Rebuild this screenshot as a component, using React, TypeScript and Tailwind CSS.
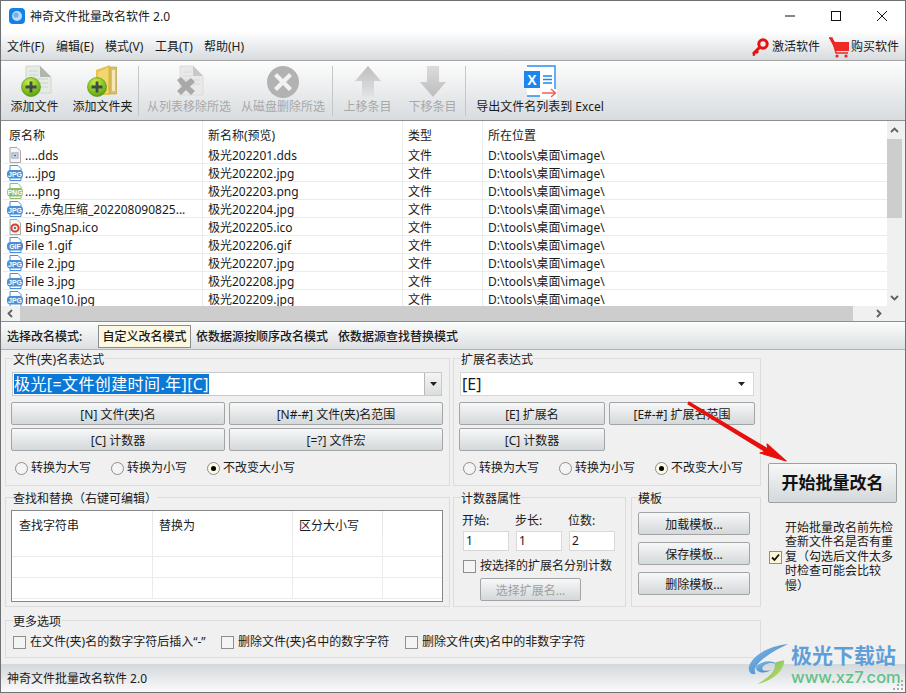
import React from "react";

const FONT = "font-['Noto_Sans','Noto_Sans_CJK_SC',sans-serif]";

function Plus({ x, y }: { x: number; y: number }) {
  return (
    <g transform={`translate(${x} ${y})`}>
      <circle r="9.5" fill="url(#gb)" stroke="#4f8a10" strokeWidth="0.6" />
      <path d="M-5.5 -1.4H-1.4V-5.5H1.4V-1.4H5.5V1.4H1.4V5.5H-1.4V1.4H-5.5Z" fill="#3c4a4a" />
    </g>
  );
}

function AddFileIcon() {
  return (
    <svg width="34" height="34" viewBox="0 0 34 34">
      <defs>
        <radialGradient id="gb" cx="0.4" cy="0.25" r="0.9">
          <stop offset="0" stopColor="#c8ec50" />
          <stop offset="0.6" stopColor="#7cbb1c" />
          <stop offset="1" stopColor="#4f8f12" />
        </radialGradient>
      </defs>
      <path d="M8 1H22L33 12V28H8Z" fill="#e6ebe6" stroke="#c4cac4" strokeWidth="0.7" />
      <path d="M22 1V12H33Z" fill="#aeb6ae" />
      <path d="M11 6H20M11 10H20M11 14H30M11 18H30M11 22H30" stroke="#cbd6c8" strokeWidth="1" />
      <Plus x={13} y={22} />
    </svg>
  );
}

function AddFolderIcon() {
  return (
    <svg width="34" height="34" viewBox="0 0 34 34">
      <path d="M10 5L24 0V30L10 30Z" fill="#e6c44e" />
      <path d="M24 2H30.5V29H24Z" fill="#dcc068" stroke="#b99a34" strokeWidth="0.6" />
      <path d="M26 5H29V26H26Z" fill="#f4e9b6" />
      <path d="M12 7L22 3V28H12Z" fill="#f0d772" />
      <Plus x={11} y={22} />
    </svg>
  );
}

function RemoveFileIcon() {
  return (
    <svg width="34" height="34" viewBox="0 0 34 34">
      <path d="M8 1H21L31 11V30H8Z" fill="#e9e9e9" stroke="#d5d5d5" strokeWidth="0.7" />
      <path d="M21 1V11H31Z" fill="#c8c8c8" />
      <path d="M11 7H19M11 11H19M11 15H28M11 19H28" stroke="#d8d8d8" strokeWidth="1" />
      <path d="M5 15L9 12L14 17L19 13L23 17L18 21.5L23 26L19 30L14 25L9 30L5 26L10 21.5Z" fill="#a8a8a8" />
    </svg>
  );
}

function DeleteDiskIcon() {
  return (
    <svg width="34" height="34" viewBox="0 0 34 34">
      <circle cx="17" cy="17" r="16" fill="#b2b2b2" />
      <path d="M11 8L17 14L23 8L26 11L20 17L26 23L23 26L17 20L11 26L8 23L14 17L8 11Z" fill="#f2f2f2" />
    </svg>
  );
}

function ArrowUp({ down }: { down?: boolean }) {
  return (
    <svg width="34" height="34" viewBox="0 0 34 34">
      <defs>
        <linearGradient id="ga" x1="0" y1="0" x2="0" y2="1">
          <stop offset="0" stopColor="#bdbdbd" />
          <stop offset="1" stopColor="#e4e4e4" />
        </linearGradient>
        <linearGradient id="gd" x1="0" y1="0" x2="0" y2="1">
          <stop offset="0" stopColor="#dcdcdc" />
          <stop offset="1" stopColor="#bcbcbc" />
        </linearGradient>
      </defs>
      {down ? (
        <path d="M11 1H23V17H30L17 32L4 17H11Z" fill="url(#gd)" />
      ) : (
        <path d="M17 1L30 16H23V32H11V16H4Z" fill="url(#ga)" />
      )}
    </svg>
  );
}

function ExcelIcon() {
  return (
    <svg width="34" height="34" viewBox="0 0 34 34">
      <path d="M4 1H32V31H4" fill="#fff" stroke="#2a8df0" strokeWidth="1.4" />
      <rect x="1" y="6" width="16" height="17" fill="#1d85ee" />
      <text x="9" y="19.5" textAnchor="middle" fontSize="14" fontWeight="700" fill="#fff" fontFamily="Liberation Sans">
        X
      </text>
      <path d="M20 11H29M20 14.5H29M20 18H29" stroke="#1d85ee" strokeWidth="1.4" />
      <rect x="17" y="24" width="17" height="10" fill="#fff" />
      <path d="M19 28H32M28 24L32.5 28L28 32" fill="none" stroke="#f0605c" strokeWidth="1.4" />
    </svg>
  );
}

function ToolButton({
  icon,
  label,
  disabled,
  className,
}: {
  icon: React.ReactNode;
  label: string;
  disabled?: boolean;
  className: string;
}) {
  return (
    <div className={`flex flex-col items-center shrink-0 ${className}`}>
      <div className="h-[34px] mt-[4px]">{icon}</div>
      <div className={`text-[12px] leading-[16px] whitespace-nowrap ${disabled ? "text-[#a8a8a8]" : "text-[#1a1a1a]"}`}>
        {label}
      </div>
    </div>
  );
}

function ToolSep() {
  return <div className="w-[1px] h-[50px] mt-[5px] bg-[#c4c6c8] shrink-0" />;
}

function FileBadge({ kind }: { kind: string }) {
  const color = kind === "PNG" ? "#8fbb73" : "#4a8ed8";
  if (kind === "DOC") {
    return (
      <svg width="16" height="16" viewBox="0 0 16 16" className="shrink-0">
        <path d="M3 .5H10L13.5 4V15.5H3Z" fill="#f6f6f6" stroke="#a8a8a8" />
        <rect x="5" y="6" width="6" height="5" fill="#fff" stroke="#8a94a8" />
        <rect x="6.5" y="7.5" width="3" height="2" fill="#4f7fb8" />
      </svg>
    );
  }
  if (kind === "ICO") {
    return (
      <svg width="16" height="16" viewBox="0 0 16 16" className="shrink-0">
        <path d="M3 .5H10L13.5 4V15.5H3Z" fill="#f6f6f6" stroke="#a8a8a8" />
        <circle cx="8" cy="9" r="3.6" fill="none" stroke="#d8402c" strokeWidth="2" />
        <circle cx="8" cy="9" r="1.2" fill="#3f7fc0" />
      </svg>
    );
  }
  return (
    <svg width="16" height="16" viewBox="0 0 16 16" className="shrink-0">
      <path d="M3 .5H11L14 3.5V15.5H3Z" fill="#fff" stroke={color} />
      <rect x="0" y="5" width="16" height="8.5" rx="3.5" fill={color} />
      <text x="8" y="12" textAnchor="middle" fontSize="7" fontWeight="700" fill="#fff" fontFamily="Liberation Sans">
        {kind}
      </text>
    </svg>
  );
}

const ROWS = [
  ["DOC", "....dds", "极光202201.dds"],
  ["JPG", "....jpg", "极光202202.jpg"],
  ["PNG", "....png", "极光202203.png"],
  ["JPG", "..._赤兔压缩_202208090825...", "极光202204.jpg"],
  ["ICO", "BingSnap.ico", "极光202205.ico"],
  ["GIF", "File 1.gif", "极光202206.gif"],
  ["JPG", "File 2.jpg", "极光202207.jpg"],
  ["JPG", "File 3.jpg", "极光202208.jpg"],
  ["JPG", "image10.jpg", "极光202209.jpg"],
];

function Chevron({ d, className }: { d: string; className?: string }) {
  return (
    <svg width="9" height="9" viewBox="0 0 9 9" className={className}>
      <path d={d} fill="none" stroke="#606060" strokeWidth="1.8" />
    </svg>
  );
}

function Btn({ children, className, disabled }: { children: React.ReactNode; className: string; disabled?: boolean }) {
  return (
    <div
      className={`flex items-center justify-center h-[23px] pt-[2px] rounded-[2px] border border-[#a2a4a6] bg-gradient-to-b from-[#f7f8f8] to-[#d3d8da] text-[12px] whitespace-pre shrink-0 ${
        disabled ? "text-[#a0a0a0]" : "text-[#1a1a1a]"
      } ${className}`}
    >
      {children}
    </div>
  );
}

function Group({
  title,
  className,
  legend,
  children,
}: {
  title: string;
  className: string;
  legend: string;
  children: React.ReactNode;
}) {
  return (
    <fieldset className={`border border-[#dcdcdc] min-w-0 shrink-0 ${className}`}>
      <legend className={`relative top-[2px] text-[12px] leading-[16px] text-[#1a1a1a] whitespace-nowrap ${legend}`}>{title}</legend>
      {children}
    </fieldset>
  );
}

function Radio({ label, checked, className }: { label: string; checked?: boolean; className: string }) {
  return (
    <div className={`flex items-center shrink-0 ${className}`}>
      <div
        className={`w-[13px] h-[13px] rounded-full border border-[#8e8e8e] flex items-center justify-center ${
          checked ? "bg-[#fdf9e6]" : "bg-[#f4f4f4]"
        }`}
      >
        {checked && <div className="w-[5px] h-[5px] rounded-full bg-black" />}
      </div>
      <span className="ml-[3px] text-[12px] text-[#1a1a1a] whitespace-nowrap">{label}</span>
    </div>
  );
}

function Check({ label, checked, className }: { label?: string; checked?: boolean; className?: string }) {
  return (
    <div className={`flex items-center shrink-0 ${className ?? ""}`}>
      <div
        className={`w-[13px] h-[13px] border border-[#8e8e8e] flex items-center justify-center ${
          checked ? "bg-[#fdf7d8]" : "bg-[#f4f4f4]"
        }`}
      >
        {checked && (
          <svg width="9" height="9" viewBox="0 0 9 9">
            <path d="M1 4.5L3.5 7L8 1.5" fill="none" stroke="#111" strokeWidth="1.8" />
          </svg>
        )}
      </div>
      {label && <span className="ml-[4px] text-[12px] text-[#1a1a1a] whitespace-nowrap">{label}</span>}
    </div>
  );
}

function Caret() {
  return (
    <svg width="7" height="4" viewBox="0 0 7 4">
      <path d="M0 0H7L3.5 4Z" fill="#222" />
    </svg>
  );
}

function RadioRow() {
  return (
    <div className="flex items-center mt-[8px] h-[18px]">
      <Radio label="转换为大写" className="w-[96px]" />
      <Radio label="转换为小写" className="w-[96px]" />
      <Radio label="不改变大小写" checked className="" />
    </div>
  );
}

function NumField({ label, value }: { label: string; value: string }) {
  return (
    <div className="w-[46px] mr-[7px] shrink-0">
      <div className="text-[12px] leading-[16px] text-[#1a1a1a] ml-[-1px] pt-[1px] h-[16px]">{label}</div>
      <div className="mt-[3px] h-[20px] w-[46px] bg-white border border-[#d8d8d8] text-[12px] leading-[18px] pl-[2px] text-[#1a1a1a]">
        {value}
      </div>
    </div>
  );
}

export default function App() {
  return (
    <div className={`relative w-[906px] h-[693px] overflow-hidden flex flex-col border border-[#6f7072] bg-[#f0f0f0] ${FONT}`}>
      {/* Title bar */}
      <div className="h-[30px] shrink-0 bg-white flex items-center pl-[8px]">
        <svg width="16" height="16" viewBox="0 0 16 16" className="shrink-0">
          <rect width="16" height="16" rx="4" fill="#1283e4" />
          <circle cx="8" cy="8" r="5" fill="#bcdcf6" />
          <circle cx="7" cy="7" r="2.6" fill="#6fb2ea" />
        </svg>
        <span className="ml-[5px] pt-[1px] text-[12px] text-[#1a1a1a] whitespace-nowrap">神奇文件批量改名软件 2.0</span>
        <div className="ml-auto flex items-center h-full">
          <svg width="46" height="30" viewBox="0 0 46 30"><path d="M18 15H28" stroke="#111" strokeWidth="1" /></svg>
          <svg width="46" height="30" viewBox="0 0 46 30"><rect x="18.5" y="10.5" width="9" height="9" fill="none" stroke="#111" /></svg>
          <svg width="46" height="30" viewBox="0 0 46 30"><path d="M18 10L28 20M28 10L18 20" stroke="#111" strokeWidth="1" /></svg>
        </div>
      </div>

      {/* Menu bar */}
      <div className="h-[30px] shrink-0 flex items-center bg-gradient-to-b from-[#ffffff] to-[#d8dcdf] border-b border-[#a4a6a8] pl-[6px] pr-[6px] pt-[2px] text-[12px] text-[#1a1a1a]">
        <span className="w-[49px] whitespace-nowrap">文件(F)</span>
        <span className="w-[49px] whitespace-nowrap">编辑(E)</span>
        <span className="w-[50px] whitespace-nowrap">模式(V)</span>
        <span className="w-[49px] whitespace-nowrap">工具(T)</span>
        <span className="whitespace-nowrap">帮助(H)</span>
        <div className="ml-auto flex items-center">
          <svg width="18" height="18" viewBox="0 0 18 18" className="shrink-0">
            <circle cx="12" cy="6" r="4.2" fill="none" stroke="#e8110f" strokeWidth="3" />
            <path d="M9 9L2 16M2 16L4 17M5 13L7 15" stroke="#e8110f" strokeWidth="3" fill="none" />
          </svg>
          <span className="ml-[3px] whitespace-nowrap">激活软件</span>
          <svg width="22" height="22" viewBox="0 0 22 22" className="ml-[8px] shrink-0">
            <path d="M1 2H4L7 6H21V15H8Z" fill="#ee2a24" />
            <path d="M1 2H4L8 17H20" fill="none" stroke="#e22" strokeWidth="1.4" />
            <circle cx="9" cy="20" r="1.6" fill="#e22" />
            <circle cx="18" cy="20" r="1.6" fill="#e22" />
          </svg>
          <span className="ml-[1px] whitespace-nowrap">购买软件</span>
        </div>
      </div>

      {/* Toolbar */}
      <div className="h-[60px] shrink-0 flex items-start bg-gradient-to-b from-[#fdfdfd] to-[#d8dcdf] border-b border-[#8c8e90] pl-[1px]">
        <ToolButton icon={<AddFileIcon />} label="添加文件" className="w-[65px]" />
        <ToolButton icon={<AddFolderIcon />} label="添加文件夹" className="w-[71px]" />
        <ToolSep />
        <ToolButton icon={<RemoveFileIcon />} label="从列表移除所选" disabled className="w-[94px] ml-[3px]" />
        <ToolButton icon={<DeleteDiskIcon />} label="从磁盘删除所选" disabled className="w-[94px] mr-[2px]" />
        <ToolSep />
        <ToolButton icon={<ArrowUp />} label="上移条目" disabled className="w-[65px] ml-[2px]" />
        <ToolButton icon={<ArrowUp down />} label="下移条目" disabled className="w-[65px]" />
        <ToolSep />
        <ToolButton icon={<ExcelIcon />} label="导出文件名列表到 Excel" className="w-[146px] ml-[1px]" />
      </div>

      {/* File list */}
      <div className="h-[201px] shrink-0 flex flex-col bg-white border-b border-[#8c8e90]">
        <div className="flex h-[185px] min-h-0">
          <div className="flex-1 min-w-0 overflow-hidden text-[12px] text-[#1a1a1a] pl-[2px]">
            <div className="flex h-[25px] items-center">
              <div className="w-[200px] pl-[6px] pt-[4px] border-r border-[#eeeeee] h-full flex items-center">原名称</div>
              <div className="w-[200px] pl-[5px] pt-[4px] border-r border-[#eeeeee] h-full flex items-center">新名称(预览)</div>
              <div className="w-[80px] pl-[5px] pt-[4px] border-r border-[#eeeeee] h-full flex items-center">类型</div>
              <div className="pl-[5px] pt-[4px] h-full flex items-center">所在位置</div>
            </div>
            {ROWS.map((r) => (
              <div key={r[2]} className="flex h-[18px] items-center border-b border-[#ebebeb]">
                <div className="w-[200px] pl-[4px] border-r border-[#ebebeb] h-full flex items-center whitespace-nowrap overflow-hidden">
                  <FileBadge kind={r[0]} />
                  <span className="ml-[2px] pt-[2px]">{r[1]}</span>
                </div>
                <div className="w-[200px] pl-[5px] pt-[2px] border-r border-[#ebebeb] h-full flex items-center">{r[2]}</div>
                <div className="w-[80px] pl-[5px] pt-[2px] border-r border-[#ebebeb] h-full flex items-center">文件</div>
                <div className="pl-[5px] pt-[2px] h-full flex items-center">D:\tools\桌面\image\</div>
              </div>
            ))}
          </div>
          <div className="w-[18px] pr-[3px] shrink-0 flex flex-col bg-[#f0f0f0]">
            <div className="h-[18px] flex items-center justify-center">
              <Chevron d="M1 6L4.5 2.5L8 6" />
            </div>
            <div className="h-[79px] bg-[#cdcdcd]" />
            <div className="flex-1" />
            <div className="h-[18px] flex items-center justify-center">
              <Chevron d="M1 3L4.5 6.5L8 3" />
            </div>
          </div>
        </div>
        <div className="h-[15px] shrink-0 flex bg-[#f0f0f0]">
          <div className="w-[19px] flex items-center justify-center">
            <Chevron d="M6 1L2.5 4.5L6 8" />
          </div>
          <div className="w-[833px] bg-[#cdcdcd]" />
          <div className="flex-1 flex items-center pl-[21px]">
            <Chevron d="M3 1L6.5 4.5L3 8" />
          </div>
        </div>
      </div>

      {/* Mode bar */}
      <div className="h-[28px] shrink-0 flex items-center bg-gradient-to-b from-[#fbfcfc] to-[#dce0e3] border-b border-[#b0b2b4] pl-[6px] pt-[2px] text-[12px] font-medium text-[#1a1a1a] whitespace-nowrap">
        <span className="w-[91px]">选择改名模式:</span>
        <span className="h-[23px] w-[93px] flex items-center justify-center border border-[#8c8c8c] bg-[#fdf8e2]">自定义改名模式</span>
        <span className="ml-[5px] w-[142px]">依数据源按顺序改名模式</span>
        <span>依数据源查找替换模式</span>
      </div>

      {/* Panels */}
      <div className="flex flex-1 min-h-0 pl-[4px]">
        <div className="w-[756px] shrink-0 flex flex-col">
          <div className="flex">
            <Group title="文件(夹)名表达式" legend="ml-[2px]" className="w-[445px] h-[136px] pl-[5px] pr-[4px]">
              <div className="mt-[6px] h-[24px] ml-[1px] w-[430px] flex bg-white border border-[#c9c9c9]">
                <span className="m-[1px] h-[20px] bg-[#0a78d7] text-white text-[16px] tracking-[0.4px] leading-[20px] whitespace-nowrap">极光[=文件创建时间.年][C]</span>
                <div className="ml-auto w-[17px] border-l border-[#b8b8b8] bg-gradient-to-b from-[#f4f5f5] to-[#dadddf] flex items-center justify-center">
                  <Caret />
                </div>
              </div>
              <div className="flex gap-[4px] mt-[6px]">
                <Btn className="w-[214px]">[N] 文件(夹)名</Btn>
                <Btn className="w-[214px]">[N#-#] 文件(夹)名范围</Btn>
              </div>
              <div className="flex gap-[4px] mt-[3px]">
                <Btn className="w-[214px]">[C] 计数器</Btn>
                <Btn className="w-[214px]">[=?] 文件宏</Btn>
              </div>
              <div className="ml-[4px]"><RadioRow /></div>
            </Group>
            <Group title="扩展名表达式" legend="ml-[2px]" className="ml-[3px] w-[308px] h-[136px] pl-[5px]">
              <div className="mt-[6px] ml-[1px] h-[24px] w-[294px] flex items-center justify-between bg-white border border-[#d8d8d8] pl-[1px] pr-[8px]">
                <span className="text-[16px] text-[#1a1a1a]">[E]</span>
                <Caret />
              </div>
              <div className="flex gap-[4px] mt-[6px]">
                <Btn className="w-[146px]">[E] 扩展名</Btn>
                <Btn className="w-[146px]">[E#-#] 扩展名范围</Btn>
              </div>
              <div className="flex gap-[4px] mt-[3px]">
                <Btn className="w-[146px]">[C] 计数器</Btn>
              </div>
              <div className="ml-[4px]"><RadioRow /></div>
            </Group>
          </div>

          <div className="flex mt-[3px]">
            <Group title="查找和替换（右键可编辑）" legend="ml-[2px]" className="w-[445px] h-[118px] px-[5px]">
              <div className="mt-[5px] h-[92px] w-[432px] bg-white border border-[#85878a] flex flex-col text-[12px] text-[#1a1a1a] overflow-hidden">
                <div className="flex h-[25px] shrink-0 items-center">
                  <div className="w-[141px] pl-[7px] pt-[4px] border-r border-[#e8e8e8] h-full flex items-center">查找字符串</div>
                  <div className="w-[140px] pl-[6px] pt-[4px] border-r border-[#e8e8e8] h-full flex items-center">替换为</div>
                  <div className="w-[90px] pl-[6px] pt-[4px] border-r border-[#e8e8e8] h-full flex items-center">区分大小写</div>
                </div>
                {[0, 1, 2].map((i) => (
                  <div key={i} className="flex shrink-0 h-[21px] border-b border-[#ebebeb]">
                    <div className="w-[141px] border-r border-[#ebebeb]" />
                    <div className="w-[140px] border-r border-[#ebebeb]" />
                    <div className="w-[90px] border-r border-[#ebebeb]" />
                  </div>
                ))}
              </div>
            </Group>
            <Group title="计数器属性" legend="ml-[-2px]" className="ml-[3px] w-[173px] h-[118px] pl-[9px]">
              <div className="flex mt-[7px]">
                <NumField label="开始:" value="1" />
                <NumField label="步长:" value="1" />
                <NumField label="位数:" value="2" />
              </div>
              <Check label="按选择的扩展名分别计数" className="mt-[6px]" />
              <Btn disabled className="w-[101px] ml-[17px] mt-[3px]">选择扩展名...</Btn>
            </Group>
            <Group title="模板" legend="ml-0" className="ml-[5px] w-[130px] h-[118px] pl-[6px]">
              <div className="flex flex-col gap-[7px] mt-[7px]">
                <Btn className="w-[112px]">加载模板...</Btn>
                <Btn className="w-[112px]">保存模板...</Btn>
                <Btn className="w-[112px]">删除模板...</Btn>
              </div>
            </Group>
          </div>

          <Group title="更多选项" legend="ml-0" className="mt-[5px] w-[756px] h-[46px] pl-[7px]">
            <div className="flex items-center h-[24px] mt-[2px]">
              <Check label="在文件(夹)名的数字字符后插入“-”" className="w-[208px]" />
              <Check label="删除文件(夹)名中的数字字符" className="w-[184px]" />
              <Check label="删除文件(夹)名中的非数字字符" />
            </div>
          </Group>
        </div>

        <div className="flex-1 flex flex-col pl-[7px] pr-[8px] pt-[113px]">
          <div className="h-[40px] w-[129px] flex items-center justify-center rounded-[2px] border border-[#9ea0a2] bg-gradient-to-b from-[#f7f8f8] to-[#d3d8da] text-[17px] font-bold text-[#111]">
            开始批量改名
          </div>
          <div className="flex items-center mt-[18px] ml-[1px]">
            <Check checked />
            <p className="ml-[3px] w-[109px] text-[12px] leading-[14.4px] text-[#1a1a1a]">
              开始批量改名前先检查新文件名是否有重复（勾选后文件太多时检查可能会比较慢）
            </p>
          </div>
        </div>
      </div>

      {/* Status bar */}
      <div className="h-[28px] shrink-0 flex items-center bg-gradient-to-b from-[#d3d8dc] to-[#fafafa] pl-[6px] pt-[1px] text-[12px] text-[#1a1a1a]">
        神奇文件批量改名软件 2.0
      </div>

      {/* Red annotation arrow */}
      <svg width="906" height="693" className="absolute left-[-1px] top-[-1px] pointer-events-none">
        <path d="M689 402L768 449L767 444L786 461L760 453L765 451.5L688 404Z" fill="#e8100c" stroke="#e8100c" strokeWidth="1.2" strokeLinejoin="round" />
      </svg>

      {/* Watermark */}
      <div className="absolute left-[746px] top-[642px] flex items-start pointer-events-none">
        <svg width="44" height="42" viewBox="0 0 44 44" className="shrink-0">
          <defs>
            <linearGradient id="wm1" x1="0" y1="0" x2="1" y2="1">
              <stop offset="0" stopColor="#7fbce8" />
              <stop offset="1" stopColor="#3d7fc4" />
            </linearGradient>
            <linearGradient id="wm2" x1="0" y1="0" x2="1" y2="1">
              <stop offset="0" stopColor="#58b88a" />
              <stop offset="1" stopColor="#d8e04a" />
            </linearGradient>
          </defs>
          <path d="M42 1C22 3 4 13 1 25C0 31 4 34 8 32C4 27 12 15 42 1Z" fill="url(#wm1)" />
          <path d="M9 24C15 18 26 18 30 22C24 20 16 22 15 26C14 29 20 30 24 28C18 33 6 31 9 24Z" fill="url(#wm1)" />
          <path d="M38 18C38 30 24 40 10 43C20 37 30 30 28 21C32 19 36 18 38 18Z" fill="url(#wm2)" />
        </svg>
        <div className="flex flex-col">
          <span className="text-[21px] leading-[25px] font-bold text-[#5f9fd8] whitespace-nowrap">极光下载站</span>
          <span className="text-[16.5px] leading-[18px] font-medium text-[#62c088] whitespace-nowrap font-['Inter',sans-serif]">www.xz7.com</span>
        </div>
      </div>

      {/* Size grip */}
      <svg width="12" height="12" viewBox="0 0 12 12" className="absolute right-[1px] bottom-[1px]">
        <path d="M9 1h2v2H9zM5 5h2v2H5zM9 5h2v2H9zM1 9h2v2H1zM5 9h2v2H5zM9 9h2v2H9z" fill="#a8aaac" />
      </svg>
    </div>
  );
}
